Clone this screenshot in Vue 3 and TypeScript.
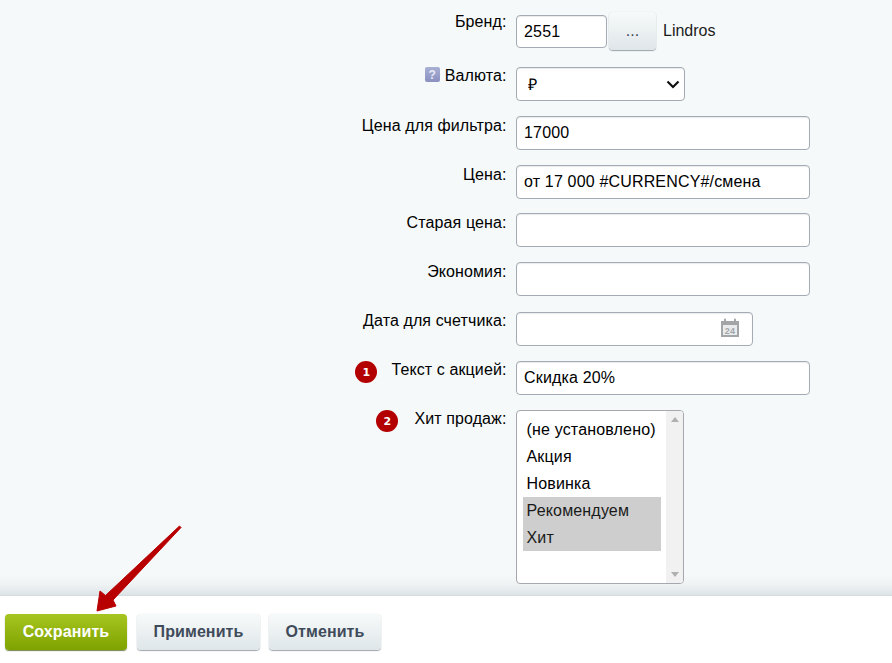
<script setup lang="ts">
const plainRows = [
  { label: 'Цена для фильтра:', value: '17000', cls: 'r-filter' },
  { label: 'Цена:', value: 'от 17 000 #CURRENCY#/смена', cls: 'r-price' },
  { label: 'Старая цена:', value: '', cls: 'r-old' },
  { label: 'Экономия:', value: '', cls: 'r-save' },
]
const options = [
  { text: '(не установлено)', selected: false },
  { text: 'Акция', selected: false },
  { text: 'Новинка', selected: false },
  { text: 'Рекомендуем', selected: true },
  { text: 'Хит', selected: true },
]
</script>

<template>
  <div class="page">
    <main class="form">
      <div class="row r-brand">
        <div class="label">Бренд:</div>
        <div class="field brand-field">
          <input class="input brand-input" value="2551" />
          <button class="btn dots" type="button">...</button>
          <span class="brand-name">Lindros</span>
        </div>
      </div>

      <div class="row r-currency">
        <div class="label"><span class="hint">?</span>Валюта:</div>
        <div class="field currency-field">
          <select class="input currency"><option>₽</option></select>
          <svg class="chevron" width="14" height="9" viewBox="0 0 14 9">
            <path d="M1.5 1.5 L7 7 L12.5 1.5" fill="none" stroke="#111" stroke-width="2.2" />
          </svg>
        </div>
      </div>

      <div v-for="row in plainRows" :key="row.label" class="row" :class="row.cls">
        <div class="label">{{ row.label }}</div>
        <div class="field"><input class="input wide" :value="row.value" /></div>
      </div>

      <div class="row r-date">
        <div class="label">Дата для счетчика:</div>
        <div class="field date-field">
          <input class="input date" />
          <svg class="cal" width="20" height="20" viewBox="0 0 20 20">
            <path fill="#a3a6a8" d="M1 3h3V1.5a1 1 0 0 1 2 0V3h8V1.5a1 1 0 0 1 2 0V3h3v16H1z" />
            <rect x="3" y="7" width="14" height="10" fill="#e9ebec" />
            <text x="10" y="15.6" text-anchor="middle" class="cal-text">24</text>
          </svg>
        </div>
      </div>

      <div class="row r-promo">
        <div class="label"><span class="badge b1">1</span>Текст с акцией:</div>
        <div class="field"><input class="input wide" value="Скидка 20%" /></div>
      </div>

      <div class="row r-hit">
        <div class="label"><span class="badge b2">2</span>Хит продаж:</div>
        <div class="field">
          <div class="listbox">
            <ul class="options">
              <li v-for="o in options" :key="o.text" class="option" :class="{ selected: o.selected }">{{ o.text }}</li>
            </ul>
            <div class="scrollbar">
              <span class="tri up"></span>
              <span class="tri down"></span>
            </div>
          </div>
        </div>
      </div>
    </main>

    <footer class="footer">
      <button class="btn action save" type="button">Сохранить</button>
      <button class="btn action apply" type="button">Применить</button>
      <button class="btn action cancel" type="button">Отменить</button>
    </footer>

    <svg class="arrow" width="892" height="663" viewBox="0 0 892 663">
      <path fill="#b80000" stroke="#b80000" stroke-width="1" stroke-linejoin="round"
        d="M179.5 526 L181 527.5 L113 600 L116 606 L97 611 L100 591 L105.5 595.5 Z" />
    </svg>
  </div>
</template>

<style scoped>
.page {
  position: relative;
  height: 663px;
  width: 892px;
  overflow: hidden;
  display: flex;
  flex-direction: column;
  background: #fff;
  font-family: "Liberation Sans", Arial, sans-serif;
  font-size: 16px;
  letter-spacing: 0.17px;
  color: #000;
}
.form {
  height: 596px;
  box-sizing: border-box;
  padding-top: 15px;
  background: linear-gradient(to bottom, #f5f9f9 0, #f5f9f9 575px, #eef2f3 585px, #dbe2e5 596px);
  border-bottom: 1px solid #d5dcdf;
}
.row {
  display: grid;
  grid-template-columns: 506.5px auto;
  column-gap: 9.5px;
  align-items: start;
}
.r-brand { height: 52px; }
.r-currency { height: 49px; }
.r-filter { height: 49px; }
.r-price { height: 48px; }
.r-old { height: 49px; }
.r-save { height: 50px; }
.r-date { height: 49px; }
.r-promo { height: 49px; }
.label {
  display: flex;
  justify-content: flex-end;
  align-items: flex-start;
  line-height: 18px;
  letter-spacing: 0.11px;
  color: #000;
}
.r-brand .label { margin-top: -2px; }
.r-filter .label,
.r-price .label,
.r-old .label,
.r-save .label { margin-top: 1px; }
.field {
  display: flex;
  align-items: flex-start;
}
.input {
  box-sizing: border-box;
  height: 34px;
  border: 1px solid #a5abb5;
  border-radius: 4px;
  background: #fff;
  padding: 0 7px;
  font: 16px "Liberation Sans", Arial, sans-serif;
  letter-spacing: 0.17px;
  color: #000;
  outline: none;
  box-shadow: inset 0 1px 1px rgba(160, 170, 180, 0.25);
}
.wide { width: 294px; }
.brand-input { width: 91px; height: 33px; }
.brand-name { margin: 7px 0 0 7px; line-height: 18px; letter-spacing: 0; color: #1c1c1c; }
.currency-field { position: relative; }
.currency {
  width: 169px;
  padding: 0 11px;
  appearance: none;
  -webkit-appearance: none;
}
.chevron { position: absolute; left: 150px; top: 13px; pointer-events: none; }
.date { width: 237px; }
.date-field { position: relative; }
.cal { position: absolute; left: 204px; top: 6px; }
.cal-text { font: bold 9px "Liberation Sans", Arial, sans-serif; fill: #a3a6a8; }
.btn {
  box-sizing: border-box;
  border: none;
  border-radius: 4px;
  cursor: pointer;
  font-family: "Liberation Sans", Arial, sans-serif;
  background: linear-gradient(to bottom, #f7fafa, #dfe6e9);
  box-shadow: 0 1px 1px rgba(90, 100, 110, 0.55), 0 0 1px rgba(120, 130, 140, 0.35);
}
.dots {
  width: 47px;
  height: 38px;
  margin: -3px 0 0 2px;
  font-size: 16px;
  color: #3f4b5b;
  padding: 0;
}
.hint {
  display: flex;
  align-items: center;
  justify-content: center;
  width: 15px;
  height: 15px;
  margin: 0 5px 0 0;
  border-radius: 2px;
  background: linear-gradient(to bottom, #a9b0d4, #8a90c0);
  color: #e8e9f5;
  font: bold 12px "Liberation Sans", Arial, sans-serif;
}
.badge {
  display: flex;
  align-items: center;
  justify-content: center;
  width: 22px;
  height: 22px;
  border-radius: 50%;
  background: #b30000;
  color: #fff;
  font: bold 11px "DejaVu Sans", sans-serif;
  letter-spacing: 0;
}
.b1 { margin-right: 14px; }
.b2 { margin-right: 16px; }
.listbox {
  box-sizing: border-box;
  display: flex;
  justify-content: space-between;
  width: 168px;
  height: 174px;
  border: 1px solid #a5a9ad;
  border-radius: 4px;
  background: #fff;
  overflow: hidden;
}
.options {
  list-style: none;
  margin: 0;
  padding: 5px 0 0 6px;
  width: 138px;
}
.option {
  height: 27px;
  line-height: 27px;
  padding-left: 3.5px;
}
.option.selected { background: #cecece; color: #1a1a1a; }
.scrollbar {
  width: 17px;
  background: #f1f1f1;
  display: flex;
  flex-direction: column;
  justify-content: space-between;
  align-items: center;
  padding: 6px 0;
  box-sizing: border-box;
}
.tri {
  width: 0;
  height: 0;
  border-left: 4px solid transparent;
  border-right: 4px solid transparent;
}
.tri.up { border-bottom: 5px solid #b0b0b0; }
.tri.down { border-top: 5px solid #b0b0b0; }
.footer {
  flex: 1;
  display: flex;
  align-items: flex-start;
  padding: 18px 0 0 5px;
  background: #fff;
}
.action {
  height: 36px;
  font-size: 16px;
  font-weight: bold;
  letter-spacing: 0.1px;
  color: #3f4b5b;
  padding: 0;
}
.save {
  width: 122px;
  background: linear-gradient(to bottom, #a7c520, #7ea300);
  color: #fff;
  box-shadow: 0 1px 1px rgba(60, 80, 0, 0.7);
}
.apply { width: 123px; margin-left: 10px; }
.cancel { width: 112px; margin-left: 9px; }
.arrow {
  position: absolute;
  left: 0;
  top: 0;
  pointer-events: none;
}
</style>
